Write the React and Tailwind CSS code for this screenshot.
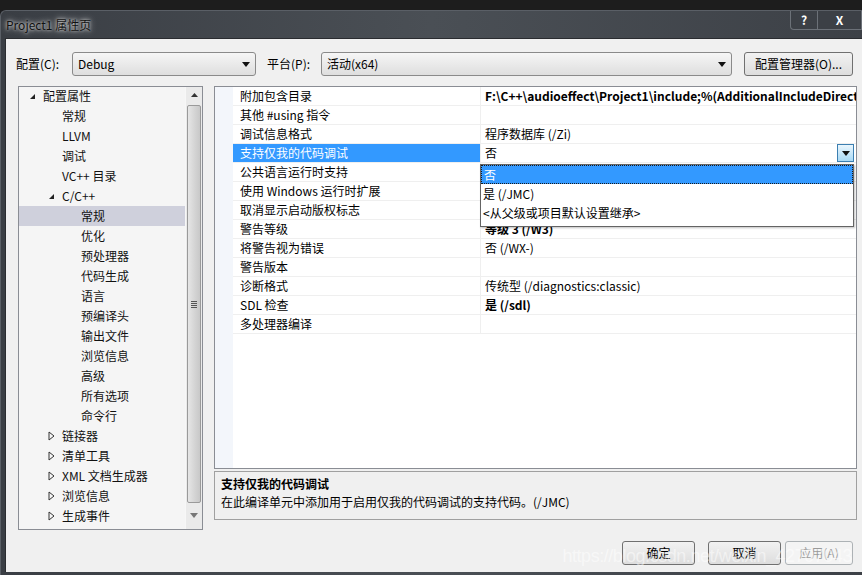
import React from "react";

const font = { fontFamily: '"Noto Sans CJK SC", "Noto Sans", sans-serif' };

const treeRows = [
  { t: "配置属性", lvl: 0, arrow: "open" },
  { t: "常规", lvl: 1 },
  { t: "LLVM", lvl: 1 },
  { t: "调试", lvl: 1 },
  { t: "VC++ 目录", lvl: 1 },
  { t: "C/C++", lvl: 1, arrow: "open" },
  { t: "常规", lvl: 2, sel: true },
  { t: "优化", lvl: 2 },
  { t: "预处理器", lvl: 2 },
  { t: "代码生成", lvl: 2 },
  { t: "语言", lvl: 2 },
  { t: "预编译头", lvl: 2 },
  { t: "输出文件", lvl: 2 },
  { t: "浏览信息", lvl: 2 },
  { t: "高级", lvl: 2 },
  { t: "所有选项", lvl: 2 },
  { t: "命令行", lvl: 2 },
  { t: "链接器", lvl: 1, arrow: "closed" },
  { t: "清单工具", lvl: 1, arrow: "closed" },
  { t: "XML 文档生成器", lvl: 1, arrow: "closed" },
  { t: "浏览信息", lvl: 1, arrow: "closed" },
  { t: "生成事件", lvl: 1, arrow: "closed" },
];

const props = [
  { n: "附加包含目录", v: "F:\\C++\\audioeffect\\Project1\\include;%(AdditionalIncludeDirectories)", b: true },
  { n: "其他 #using 指令", v: "" },
  { n: "调试信息格式", v: "程序数据库 (/Zi)" },
  { n: "支持仅我的代码调试", v: "否", sel: true },
  { n: "公共语言运行时支持", v: "" },
  { n: "使用 Windows 运行时扩展", v: "" },
  { n: "取消显示启动版权标志", v: "" },
  { n: "警告等级", v: "等级 3 (/W3)", b: true },
  { n: "将警告视为错误", v: "否 (/WX-)" },
  { n: "警告版本", v: "" },
  { n: "诊断格式", v: "传统型 (/diagnostics:classic)" },
  { n: "SDL 检查", v: "是 (/sdl)", b: true },
  { n: "多处理器编译", v: "" },
];

const OpenArrow = () => (
  <svg width="7" height="7" viewBox="0 0 7 7">
    <path d="M6 1 L6 6 L1 6 Z" fill="#222" />
  </svg>
);
const ClosedArrow = () => (
  <svg width="7" height="10" viewBox="0 0 7 10">
    <path d="M1 1 L6 5 L1 9 Z" fill="none" stroke="#333" strokeWidth="1" />
  </svg>
);
const Down = ({ c = "#111" }) => (
  <svg width="8" height="5" viewBox="0 0 8 5">
    <path d="M0 0 L8 0 L4 5 Z" fill={c} />
  </svg>
);

const Combo = ({ w, text }) => (
  <div
    className={`${w} h-[24px] shrink-0 flex items-center justify-between pl-[5px] pr-[5px] border border-[#8a8a8a] rounded-[3px] bg-gradient-to-b from-[#f6f6f6] to-[#dedede] text-[12px] text-black`}
  >
    <span>{text}</span>
    <Down />
  </div>
);

const Btn = ({ w, text, disabled }) => (
  <div
    className={`${w} h-[24px] shrink-0 flex items-center justify-center rounded-[3px] border text-[12px] ${
      disabled
        ? "border-[#adb2b5] bg-[#f4f4f4] text-[#9a9a9a]"
        : "border-[#707070] bg-gradient-to-b from-[#f2f2f2] to-[#dddddd] text-black"
    }`}
  >
    {text}
  </div>
);

export default function App() {
  return (
    <div className="w-[862px] h-[575px] bg-[#1b1c1e] flex flex-col overflow-hidden" style={font}>
      <div className="h-[10px] shrink-0 bg-[#1d1d1d]" />
      <div className="flex-1 flex flex-col rounded-tl-[6px] bg-gradient-to-r from-[#3a3e44] via-[#4a4f55] to-[#3d4147] border-l border-t border-[#5a5f66]">
        <div className="h-[27px] shrink-0 flex items-start justify-between">
          <div className="pl-[5px] pt-[8px] text-[12px] leading-none text-[#111] [text-shadow:0_0_6px_#e8e8e8,0_0_3px_#d0d0d0]">
            Project1 属性页
          </div>
          <div className="flex">
            <div className="w-[28px] h-[19px] flex items-center justify-center border border-[#6c7178] border-t-0 rounded-bl-[4px] bg-[#3c4046] text-white text-[12px] font-bold">
              ?
            </div>
            <div className="w-[44px] h-[19px] flex items-center justify-center border border-[#6c7178] border-t-0 border-l-0 bg-[#3c4046] text-white text-[12px] font-bold">
              X
            </div>
          </div>
        </div>
        <div className="flex-1 ml-[4px] mb-[3px] bg-[#f0f0f0] border-l border-t border-[#2a2c30] flex flex-col">
          <div className="h-[37px] flex items-end pl-[10px] text-[12px] text-black">
            <div className="flex items-center h-[24px] w-[56px] whitespace-nowrap">配置(C):</div>
            <Combo w="w-[184px]" text="Debug" />
            <div className="flex items-center h-[24px] ml-[11px] w-[54px] whitespace-nowrap">平台(P):</div>
            <Combo w="w-[411px]" text="活动(x64)" />
            <div className="ml-[12px]">
              <Btn w="w-[109px]" text="配置管理器(O)..." />
            </div>
          </div>
          <div className="flex mt-[10px] pl-[12px] gap-[11px]">
            {/* tree */}
            <div className="w-[185px] h-[444px] shrink-0 border border-[#8a8d94] bg-[#f5f5f5] flex">
              <div className="flex-1 -mt-[1px] text-[12px] text-[#111]">
                {treeRows.map((r, i) => (
                  <div
                    key={i}
                    className={`h-[20px] flex items-center ${r.sel ? "bg-[#cfd0dc]" : ""}`}
                  >
                    <div
                      className={`flex items-center justify-center w-[12px] ${
                        r.lvl === 0 ? "ml-[7px]" : r.lvl === 1 ? "ml-[26px]" : "ml-[45px]"
                      }`}
                    >
                      {r.arrow === "open" && <OpenArrow />}
                      {r.arrow === "closed" && <ClosedArrow />}
                    </div>
                    <span className="ml-[5px]">{r.t}</span>
                  </div>
                ))}
              </div>
              <div className="w-[17px] flex flex-col items-center bg-[#eaeaea] border-l border-[#f7f7f7]">
                <div className="h-[16px] flex items-center justify-center">
                  <svg width="7" height="4" viewBox="0 0 7 4">
                    <path d="M0 4 L7 4 L3.5 0 Z" fill="#333" />
                  </svg>
                </div>
                <div className="w-[14px] mt-[2px] h-[398px] rounded-[2px] border border-[#9a9a9a] bg-gradient-to-r from-[#e6e6e6] via-[#d6d6d6] to-[#c8c8c8] flex items-center justify-center">
                  <div className="flex flex-col gap-[1px]">
                    <div className="w-[6px] h-[1px] bg-[#555]" />
                    <div className="w-[6px] h-[1px] bg-[#555]" />
                    <div className="w-[6px] h-[1px] bg-[#555]" />
                    <div className="w-[6px] h-[1px] bg-[#555]" />
                  </div>
                </div>
                <div className="h-[24px] flex items-center justify-center">
                  <Down c="#777" />
                </div>
              </div>
            </div>
            {/* right */}
            <div className="w-[643px] shrink-0 flex flex-col">
              <div className="relative h-[383px] border border-[#8a8d94] bg-white flex text-[12px] text-black">
                <div className="w-[18px] shrink-0 bg-[#f3f6fb]" />
                <div className="flex-1 min-w-0 flex flex-col">
                  {props.map((p, i) => (
                    <div key={i} className="h-[19px] flex border-b border-[#efefef]">
                      <div
                        className={`w-[247px] shrink-0 pl-[7px] flex items-center whitespace-nowrap ${
                          p.sel ? "bg-[#3399ff] text-white" : ""
                        }`}
                      >
                        {p.n}
                      </div>
                      <div className="w-[1px] shrink-0 bg-[#efefef]" />
                      <div
                        className={`flex-1 min-w-0 pl-[4px] flex items-center whitespace-nowrap overflow-hidden ${
                          p.b ? "font-bold" : ""
                        }`}
                      >
                        <span className="flex-1 min-w-0 overflow-hidden">{p.v}</span>
                        {p.sel && (
                          <div className="w-[17px] h-[18px] shrink-0 mr-[2px] border border-[#3c7fb1] bg-gradient-to-b from-[#eaf6fd] to-[#a7d9f5] flex items-center justify-center">
                            <Down />
                          </div>
                        )}
                      </div>
                    </div>
                  ))}
                </div>
                {/* dropdown */}
                <div className="absolute left-[265px] top-[77px] w-[374px] h-[63px] bg-white border border-[#646464] text-[12px] flex flex-col shadow-[1px_1px_2px_rgba(0,0,0,0.25)]">
                  <div className="h-[19px] bg-[#3399ff] text-white pl-[2px] flex items-center border border-dotted border-[#1a1a1a]">
                    否
                  </div>
                  <div className="h-[19px] pl-[2px] flex items-center">是 (/JMC)</div>
                  <div className="h-[19px] pl-[2px] flex items-center">&lt;从父级或项目默认设置继承&gt;</div>
                </div>
              </div>
              <div className="mt-[2px] h-[49px] border border-[#a0a0a0] bg-[#f0f0f0] px-[6px] pt-[3px] text-[12px] text-black">
                <div className="font-bold leading-[18px]">支持仅我的代码调试</div>
                <div className="leading-[18px]">在此编译单元中添加用于启用仅我的代码调试的支持代码。(/JMC)</div>
              </div>
            </div>
          </div>
          <div className="relative flex justify-end gap-[13px] pr-[9px] mt-[11px]">
            <Btn w="w-[73px]" text="确定" />
            <div className="flex gap-[4px]">
              <Btn w="w-[73px]" text="取消" />
              <Btn w="w-[68px]" text="应用(A)" disabled />
            </div>
            <div
              className="absolute right-[10px] top-[2px] text-[18px] text-white/50 tracking-tight pointer-events-none"
              style={{ fontFamily: '"Liberation Sans", sans-serif' }}
            >
              https://blog.csdn.net/weixin_42707043
            </div>
          </div>
        </div>
      </div>
    </div>
  );
}
